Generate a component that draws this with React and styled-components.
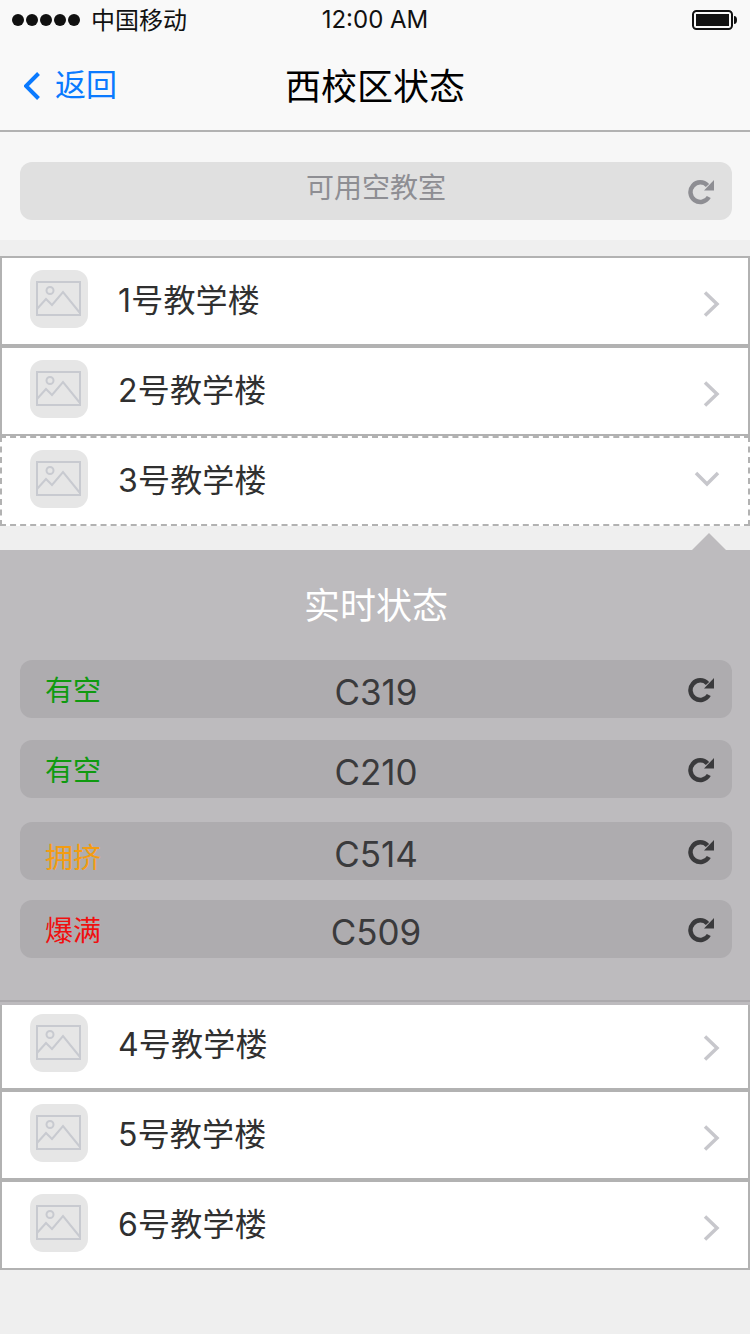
import React from 'react';
import styled, { createGlobalStyle } from 'styled-components';

const GlobalStyle = createGlobalStyle`
  html, body {
    margin: 0;
    padding: 0;
    background: #efefef;
  }

  * {
    box-sizing: border-box;
  }
`;

const FONT = `'Noto Sans CJK SC', 'Noto Sans', sans-serif`;
const LATIN_FONT = `'Inter', 'Noto Sans CJK SC', sans-serif`;

const Page = styled.div`
  width: 750px;
  height: 1334px;
  overflow: hidden;
  background: #efefef;
  font-family: ${FONT};
`;

const Header = styled.header`
  height: 132px;
  background: #f9f9f9;
  border-bottom: 2px solid #b2b2b2;
`;

const StatusBar = styled.div`
  display: grid;
  grid-template-columns: 1fr auto 1fr;
  align-items: center;
  height: 40px;
  padding: 0 12px;
  color: #111;
`;

const Carrier = styled.div`
  display: flex;
  align-items: center;
  font-size: 24px;
`;

const CarrierName = styled.span`
  line-height: 34px;
  padding-bottom: 3px;
`;

const Dots = styled.div`
  display: flex;
  gap: 2px;
  margin-right: 11px;
`;

const Dot = styled.span`
  width: 12px;
  height: 12px;
  border-radius: 50%;
  background: #111;
`;

const Time = styled.div`
  font: 400 24px ${LATIN_FONT};
  padding-bottom: 2px;
`;

const Battery = styled.svg`
  justify-self: end;
`;

const NavBar = styled.div`
  display: grid;
  grid-template-columns: 1fr auto 1fr;
  align-items: center;
  height: 90px;
  padding: 0 24px 2px;
`;

const Back = styled.div`
  display: flex;
  align-items: center;
  gap: 13px;
  color: #0a7aff;
  font-size: 31px;
  line-height: 44px;
`;

const BackArrow = styled.svg`
  margin-top: 4px;
`;

const BackLabel = styled.span`
  padding-bottom: 2px;
`;

const Title = styled.h1`
  margin: 0;
  color: #000;
  font-size: 36px;
  font-weight: 400;
`;

const SearchArea = styled.div`
  height: 108px;
  padding: 30px 18px 0 20px;
  background: #f7f7f7;
`;

const Bar = styled.div`
  display: grid;
  grid-template-columns: 1fr auto 1fr;
  align-items: center;
  height: 58px;
  margin-top: ${props => props.$top || 0}px;
  padding: 0 17px;
  border-radius: 12px;
  background: ${props => props.$muted ? '#e0e0e0' : '#aeacaf'};
`;

const BarLabel = styled.div`
  color: #8e8e93;
  font-size: 28px;
  line-height: 48px;
  padding-bottom: 10px;
`;

const BarIcon = styled.svg`
  justify-self: end;
  color: ${props => props.$muted ? '#8e8e93' : '#3a3a3c'};
`;

const List = styled.div`
  margin-top: ${props => props.$top || 0}px;
`;

const Row = styled.div`
  display: flex;
  align-items: center;
  height: ${props => props.$flush ? 85 : 90}px;
  padding: 0 28px ${props => props.$flush ? 7 : 4}px;
  background: #fff;
  border: 2px ${props => props.$open ? 'dashed' : 'solid'} #b2b2b2;
  border-top-width: ${props => props.$flush ? 0 : 2}px;
`;

const Thumb = styled.div`
  display: flex;
  align-items: center;
  justify-content: center;
  flex: none;
  width: 58px;
  height: 58px;
  border-radius: 13px;
  background: #e6e6e6;
`;

const RowName = styled.div`
  flex: 1;
  margin-left: 30px;
  padding-top: 4px;
  color: #303030;
  font: 400 32px/44px ${LATIN_FONT};
  letter-spacing: .2px;
`;

const ClosedArrow = styled.svg`
  margin-top: 10px;
`;

const Panel = styled.section`
  position: relative;
  height: 455px;
  margin-top: 24px;
  padding: 0 18px 0 20px;
  background: #bdbbbe;

  &::before {
    content: '';
    position: absolute;
    right: 24px;
    top: -17px;
    border-left: 17px solid transparent;
    border-right: 17px solid transparent;
    border-bottom: 17px solid #bdbbbe;
  }

  &::after {
    content: '';
    position: absolute;
    left: 0;
    right: 0;
    bottom: 3px;
    height: 2px;
    background: #acaaad;
  }
`;

const PanelTitle = styled.h2`
  margin: 0;
  height: 110px;
  color: #fff;
  font-size: 36px;
  font-weight: 400;
  line-height: 106px;
  text-align: center;
`;

const State = styled.div`
  justify-self: start;
  margin-left: 8px;
  padding-top: ${props => props.$shift || 0}px;
  color: ${props => props.$color};
  font-size: 28px;
  line-height: 36px;
`;

const Room = styled.div`
  color: #3a3a3c;
  font: 400 35px ${LATIN_FONT};
  padding-top: 5px;
`;

const Refresh = ({ muted }) => (
  <BarIcon $muted={muted} width="28" height="28" viewBox="0 0 28 28">
    <path
      d="M20.500 8.500A9.800 9.800 0 1 0 21.800 20"
      fill="none"
      stroke="currentColor"
      strokeWidth="4.500"
    />
    <path d="M27 3v10.500H17z" fill="currentColor" />
  </BarIcon>
);

const PictureIcon = () => (
  <svg width="46" height="36" viewBox="0 0 46 36" fill="none" stroke="#c8cad0" strokeWidth="2">
    <rect x="1" y="1" width="43" height="33" />
    <circle cx="14" cy="9.500" r="3.500" />
    <path d="M1 28l9-10 6 6 11-13 17 21" />
  </svg>
);

const Chevron = ({ open }) => (
  open ? (
    <svg width="28" height="18" viewBox="0 0 28 18" fill="none" stroke="#c7c7cc" strokeWidth="3.500">
      <path d="M4 3l11 11L26 3" />
    </svg>
  ) : (
    <ClosedArrow width="20" height="28" viewBox="0 0 20 28" fill="none" stroke="#c7c7cc" strokeWidth="3.500">
      <path d="M5 2.500L17 14 5 25.500" />
    </ClosedArrow>
  )
);

const Building = ({ name, open, flush }) => (
  <Row $open={open} $flush={flush}>
    <Thumb>
      <PictureIcon />
    </Thumb>
    <RowName>{name}</RowName>
    <Chevron open={open} />
  </Row>
);

const rooms = [
  { state: '有空', color: '#0f9a0f', room: 'C319', top: 0 },
  { state: '有空', color: '#0f9a0f', room: 'C210', top: 22 },
  { state: '拥挤', color: '#f39c12', room: 'C514', top: 24, shift: 10 },
  { state: '爆满', color: '#f01010', room: 'C509', top: 20 },
];

const App = () => (
  <Page>
    <GlobalStyle />
    <Header>
      <StatusBar>
        <Carrier>
          <Dots>
            {[0, 1, 2, 3, 4].map(i => <Dot key={i} />)}
          </Dots>
          <CarrierName>中国移动</CarrierName>
        </Carrier>
        <Time>12:00 AM</Time>
        <Battery width="46" height="20" viewBox="0 0 46 20">
          <rect x="1" y="1" width="39" height="18" rx="3.500" fill="none" stroke="#111" strokeWidth="2" />
          <rect x="4" y="4" width="33" height="12" fill="#111" />
          <path d="M42 6c2 0 3 1.500 3 4s-1 4-3 4z" fill="#111" />
        </Battery>
      </StatusBar>
      <NavBar>
        <Back>
          <BackArrow width="18" height="30" viewBox="0 0 18 30" fill="none" stroke="#0a7aff" strokeWidth="4">
            <path d="M14.500 2.500L2 15l12.500 12.500" />
          </BackArrow>
          <BackLabel>返回</BackLabel>
        </Back>
        <Title>西校区状态</Title>
      </NavBar>
    </Header>
    <SearchArea>
      <Bar $muted>
        <span />
        <BarLabel>可用空教室</BarLabel>
        <Refresh muted />
      </Bar>
    </SearchArea>
    <List $top={16}>
      <Building name="1号教学楼" />
      <Building name="2号教学楼" />
      <Building name="3号教学楼" open />
    </List>
    <Panel>
      <PanelTitle>实时状态</PanelTitle>
      {rooms.map(item => (
        <Bar key={item.room} $top={item.top}>
          <State $color={item.color} $shift={item.shift}>{item.state}</State>
          <Room>{item.room}</Room>
          <Refresh />
        </Bar>
      ))}
    </Panel>
    <List>
      <Building name="4号教学楼" flush />
      <Building name="5号教学楼" />
      <Building name="6号教学楼" />
    </List>
  </Page>
);

export default App;
